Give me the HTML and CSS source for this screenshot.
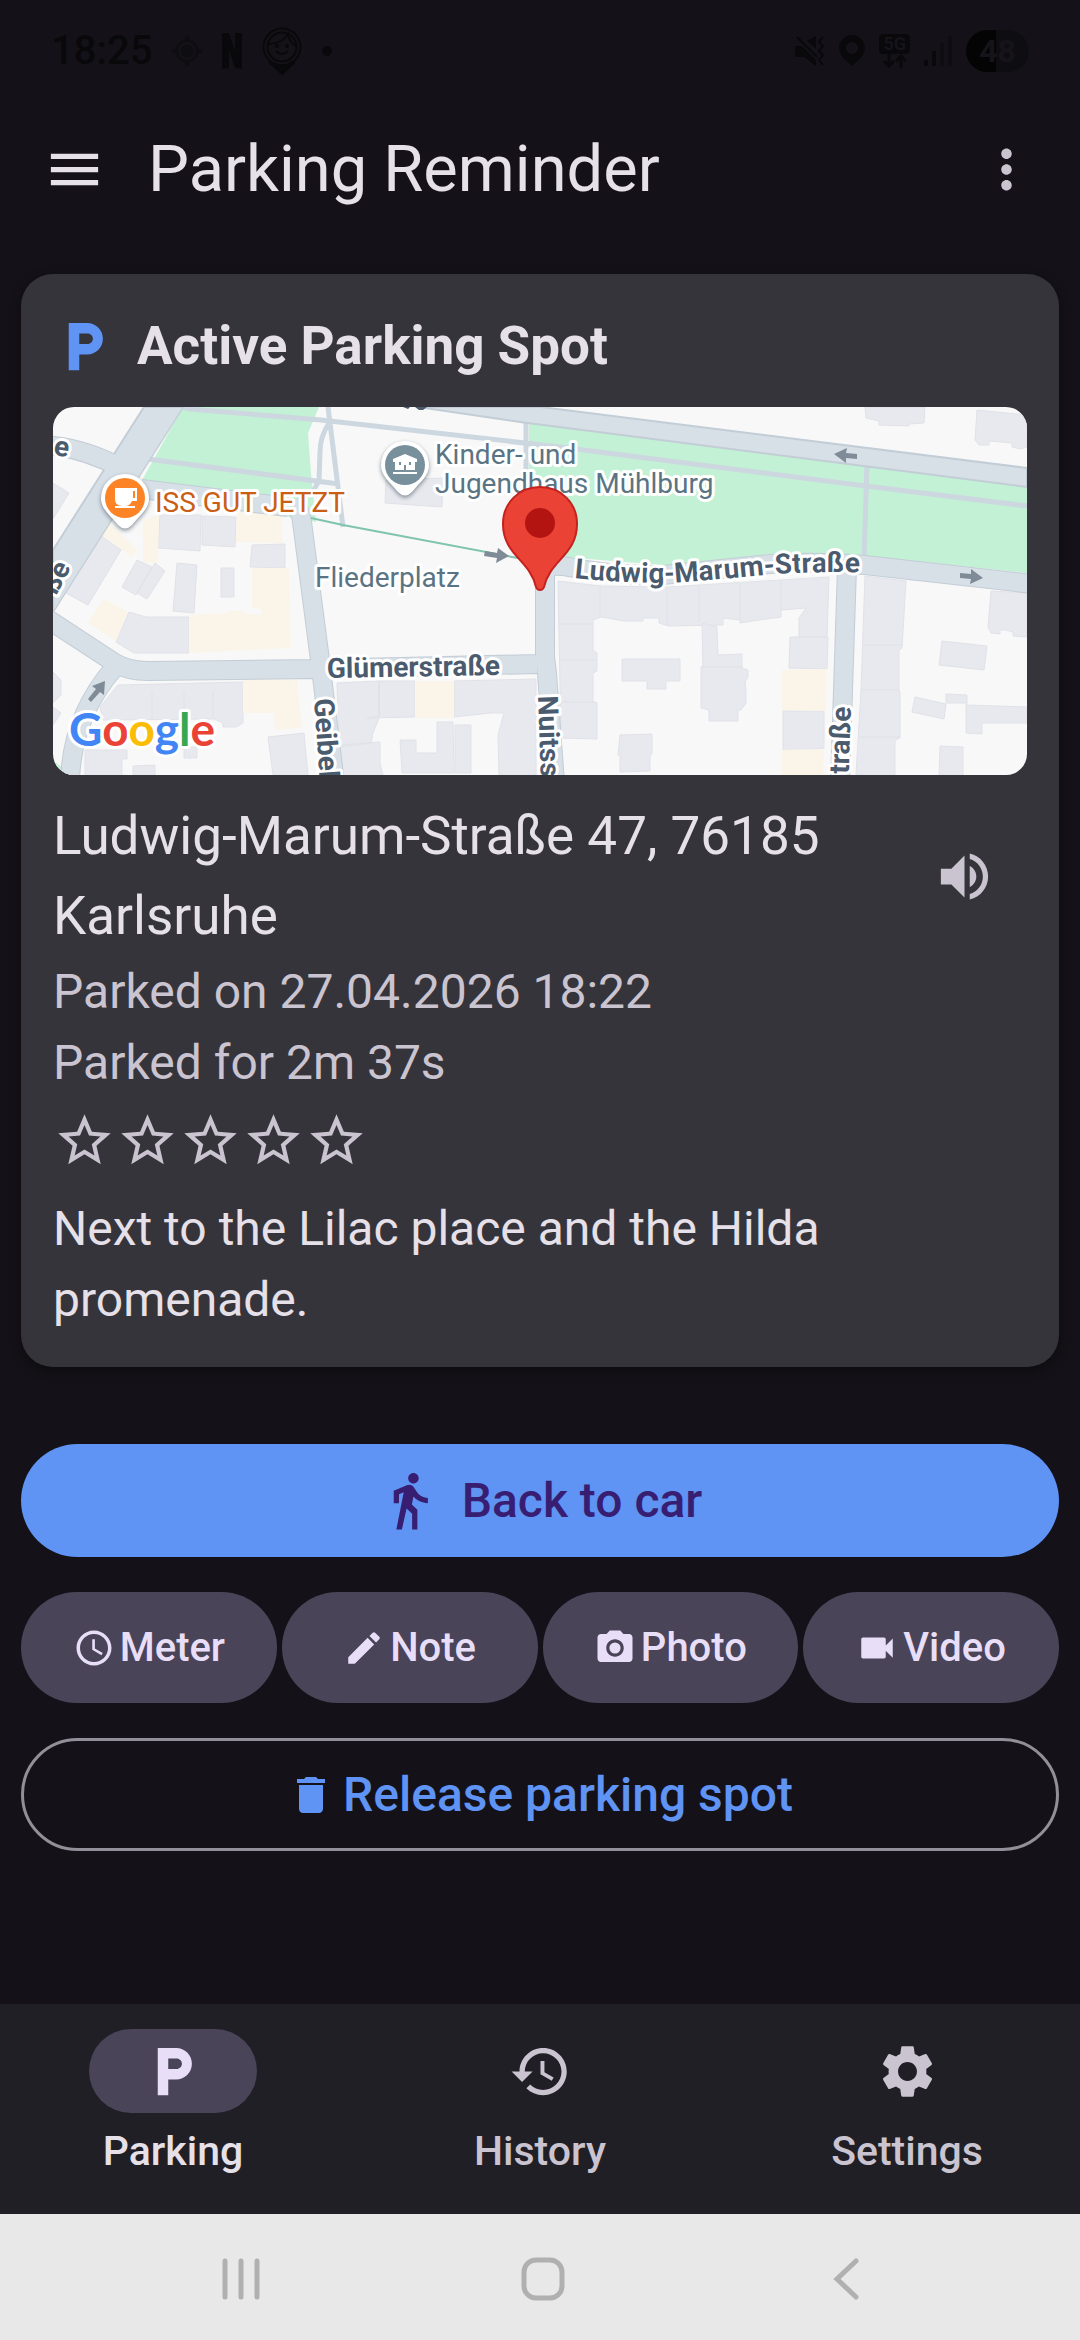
FILE: index.html
```html
<!DOCTYPE html>
<html lang="en">
<head>
  <meta charset="UTF-8" />
  <meta name="viewport" content="width=device-width, initial-scale=1" />
  <title>Parking Reminder</title>
  <link rel="stylesheet" href="styles.css">
</head>
<body>
  <div class="status-bar">
    <div class="status-left">
      <span class="clock">18:25</span>
      <svg class="status-icon dim" width="30" height="32" viewBox="0 0 32 32"><circle cx="16" cy="16" r="11" fill="none" stroke="currentColor" stroke-width="3"/><circle cx="16" cy="16" r="7" fill="currentColor"/><path d="M14 0h4v5h-4zM14 27h4v5h-4zM0 14h5v4H0zM27 14h5v4h-5z" fill="currentColor"/></svg>
      <svg class="status-icon" width="20" height="36" viewBox="0 0 20 36"><path d="M0 0h7l6 18V0h7v36l-7-1L7 17v18l-7 1z" fill="currentColor"/></svg>
      <svg class="status-icon" width="40" height="48" viewBox="0 0 40 48" fill="none" stroke="currentColor" stroke-width="2"><circle cx="20" cy="20" r="18.500"/><circle cx="20" cy="20" r="14.500"/><path d="M6 17q14 0 20-10 1 8 8 12"/><path d="M14 24q6 6 12 0"/><circle cx="15" cy="19" r="1"/><circle cx="25" cy="19" r="1"/><path d="M7 35q13 7 26 0L20 47z" fill="currentColor"/></svg>
      <svg class="status-icon" width="10" height="10" viewBox="0 0 10 10"><circle cx="5" cy="5" r="5" fill="currentColor"/></svg>
    </div>
    <div class="status-right">
      <svg class="status-icon" width="30" height="32" viewBox="0 0 30 32"><path d="M0 11h7l14 14v6l-12-9H0zM12 6l9-5v13z" fill="currentColor"/><path d="M2 2l20 20M28 2l-4 5 4 4-4 5 4 4-4 5 4 5" fill="none" stroke="currentColor" stroke-width="2"/></svg>
      <svg class="status-icon" width="26" height="32" viewBox="0 0 26 32"><path d="M13 0C6 0 0 6 0 13c0 8 8 13 13 18 5-5 13-10 13-18C26 6 20 0 13 0zm0 7a6 6 0 1 1 0 12 6 6 0 0 1 0-12z" fill="currentColor" fill-rule="evenodd"/></svg>
      <div class="network">
        <span class="network-type">5G</span>
        <svg width="24" height="14" viewBox="0 0 24 14" fill="none" stroke="currentColor" stroke-width="3"><path d="M6 0v12M1 7l5 5 5-5M18 14V2M13 7l5-5 5 5"/></svg>
      </div>
      <svg class="status-icon" width="28" height="30" viewBox="0 0 28 30"><path d="M0 24h4v6H0zM8 15h4v15H8z" fill="currentColor"/><path d="M16 7h4v23h-4zM24 0h4v30h-4z" fill="#0e0d12"/></svg>
      <span class="battery">48</span>
    </div>
  </div>

  <header class="app-bar">
    <button class="icon-button" aria-label="Open menu">
      <svg class="icon light" viewBox="0 0 24 24"><path d="M3 18h18v-2H3v2zm0-5h18v-2H3v2zm0-7v2h18V6H3z"/></svg>
    </button>
    <h1>Parking Reminder</h1>
    <button class="icon-button" aria-label="More options">
      <svg class="icon" viewBox="0 0 24 24"><path d="M12 8c1.100 0 2-.9 2-2s-.9-2-2-2-2 .9-2 2 .9 2 2 2zm0 2c-1.100 0-2 .9-2 2s.9 2 2 2 2-.9 2-2-.9-2-2-2zm0 6c-1.100 0-2 .9-2 2s.9 2 2 2 2-.9 2-2-.9-2-2-2z"/></svg>
    </button>
  </header>

  <main>
    <section class="card">
      <div class="card-header">
        <svg class="icon accent" viewBox="0 0 24 24"><path d="M13 3H6v18h4v-6h3c3.310 0 6-2.690 6-6s-2.690-6-6-6zm.2 8H10V7h3.200c1.100 0 2 .9 2 2s-.9 2-2 2z"/></svg>
        <h2>Active Parking Spot</h2>
      </div>

      <svg class="map" viewBox="0 0 974 368" preserveAspectRatio="xMidYMid slice" role="img" aria-label="Map of the parking spot">
        <defs>
          <path id="ludwigPath" d="M521 171Q575 177 624 175.500Q670 172 717 167.500Q760 164 830 166"/>
        </defs>
        <rect width="974" height="368" fill="#f8f8f8"/>

        <!-- parks -->
        <g fill="#c3f1d5">
          <path d="M130 0H266L255 26 258 66 263 115 84 82z"/>
          <path d="M476 16L974 80V166L813 149 770 146 717 147 638 158 610 158 510 150 476 80z"/>
          <path d="M0 353l8 7v8H0z"/>
        </g>

        <!-- buildings -->
        <g fill="#e8e9ee" stroke="#e0e2e8" stroke-width="1">
          <path d="M107 108L148 108 147 144 105 141zM149 109L183 110 182 140 149 138zM199 138L232 137 232 161 197 160z"/>
          <path d="M76 205L93 210 136 210 136 246 81 246 63 235zM44 126L68 143 35 198 11 185zM84 153L99 160 83 188 69 180zM102 156L112 164 94 192 84 186zM124 156L144 158 141 206 120 204zM168 161h13v29h-13z"/>
          <path d="M65 278L190 275 190 316 183 320 170 320 170 316 161 312 50 313 47 300zM215 330L251 326 255 368 220 368zM32 343h42v9h-5v16H32zM80 359L102 358V368H80zM131 340h13v11h-13z"/>
          <path d="M0 265L8 273V288L0 296zM0 300L8 306 0 318zM0 76L16 86 0 112zM333 73L390 71 389 100 332 96z"/>
          <path d="M284 276L326 274 326 311 320 326 318 336 286 340zM326 274H362V310L314 311 326 309zM401 274L483 272V368H446L445 328 451 306 438 306 401 310zM286 338L327 335 327 356 330 368H290zM347 333H363V346H384V315H400L401 366H349zM402 318h16v48h-16z"/>
          <path d="M505 174L547 179 614 180 776 170 774 230H746V211L753 201 728 203V210L706 213 687 216 687 213 670 211V218L616 219 606 216V211L590 211V214H571L548 210 540 213V243L544 246V264L540 266V295L544 296V332L508 331z"/>
          <path d="M649 216L664 220 665 248 689 247V261L695 263V270L692 275 693 284 693 296 688 303 685 303V314H656V303L648 301V260L650 260z"/>
          <path d="M569 252H627V274H613V282H594V274H569zM567 328L599 327V347L597 348V364L567 365V348L565 348zM737 230H775L774 262 736 261zM730 304H771V341L730 345z"/>
          <path d="M812 169L853 174 849 241 846 243V283L847 285V331L842 333V368H803L808 283z"/>
          <path d="M938 184L974 186V230L960 229 960 225 953 223 947 223V227L938 226 935 220zM889 234L934 239 931 263 886 258zM862 290L893 297 891 312 859 305zM893 287L914 288V298L974 300V316H929V327L913 326V296H893zM887 339L910 340V368H886z"/>
          <path d="M812 0H872L871 16 856 17V19L826 18V14L813 11zM924 3L974 8V40L967 42 959 40V36L936 34V38L926 38 922 33z"/>
        </g>
        <g fill="#faf5e8">
          <path d="M184 104L229 106V136L183 135zM199 161H236L238 241 136 246V208L175 206V204H190V206L208 208V202L199 200zM51 192L75 205 63 234 35 216zM50 110L68 127 84 143 79 150 45 126zM90 113L106 108 105 156 90 155z"/>
          <path d="M190 270L211 269 211 271 244 271 249 321 222 323 221 306H190zM362 274H401V311H362zM729 263L774 262 773 304 729 303zM729 343L771 342 770 368H729z"/>
        </g>
        <path d="M547 180V210M614 181V218M646 179V215M687 177V212M728 174V203M505 217h35M506 253h37M507 295h36M649 260h40M810 238h40M808 283h38M806 330h41M99 285v27M131 285v27M160 285v27M326 275v35" fill="none" stroke="#dfe1e7" stroke-width="1"/>

        <!-- footpaths -->
        <g fill="none" stroke="#ccd7e0" stroke-width="5">
          <path d="M125 -2L136 2 268 13 507 40 813 79 974 99M95 52L286 77M275 0L277 16 290 120M276 16Q267 30 267 45L266 73 261 83M473 15V90M814 57L811 152"/>
        </g>

        <!-- roads, outline first and fill on top -->
        <g fill="none" stroke="#c3cdd6" stroke-width="20">
          <path d="M-10 38Q30 40 70 62M88 82L235 100M240 98Q248 103 249 115L267 253 282 376M-10 209L62 256Q75 264 95 264L260 262 484 257M62 260Q18 310 17 376M492 158V250L494 266 502 376M485 158L510 159Q560 169 610 168L717 157Q760 154 812 158L980 177M794 160L787 376"/>
        </g>
        <path d="M91 0H130L0 205V143zM365 0H488L974 61V80L467 15z" fill="#d7dfe7" stroke="#c3cdd6" stroke-width="2"/>
        <g fill="none" stroke="#d7dfe7" stroke-width="18">
          <path d="M-10 38Q30 40 70 62M88 82L235 100M240 98Q248 103 249 115L267 253 282 376M-10 209L62 256Q75 264 95 264L260 262 484 257M62 260Q18 310 17 376M492 158V250L494 266 502 376M485 158L510 159Q560 169 610 168L717 157Q760 154 812 158L980 177M794 160L787 376"/>
        </g>
        <path d="M92 1H129L1 203V144z" fill="#d7dfe7"/>

        <path d="M258 111L290 118 470 152" fill="none" stroke="#80c4ac" stroke-width="2"/>
        <g fill="#7f8b96">
          <path d="M432 144l12 2 1-5 11 8-13 7 1-5-13-2z"/>
          <path d="M781 47l13-6-1 5 11 1v5l-11-1v5z"/>
          <path d="M930 171l-13 6 1-5-11-1v-5l11 1v-5z"/>
          <path d="M52 274l-1 14-4-3-9 10-3-3 8-10-4-3z"/>
        </g>
        <path d="M350 0h7l-2 2zM362 0h12l-4 3h-4z" fill="#4b5b6e"/>

        <!-- street names -->
        <g class="street">
          <text x="274" y="271" transform="rotate(-1 274 271)">Glümerstraße</text>
          <text><textPath href="#ludwigPath">Ludwig-Marum-Straße</textPath></text>
          <text transform="translate(485 289) rotate(88)">Nuitss</text>
          <text transform="translate(261 292) rotate(86)">Geibel</text>
          <text transform="translate(798 300) rotate(-88)" text-anchor="end">traße</text>
          <text transform="translate(18 160) rotate(-63)" text-anchor="end">ße</text>
          <text transform="translate(15 50) rotate(8)" text-anchor="end">e</text>
        </g>
        <g class="poi">
          <text x="382" y="57">Kinder- und</text>
          <text x="382" y="86">Jugendhaus Mühlburg</text>
          <text x="262" y="180">Fliederplatz</text>
          <text class="food" x="102" y="105">ISS GUT JETZT</text>
        </g>

        <!-- place pins -->
        <g class="place-pin">
          <path d="M72 67a24 24 0 0 1 24 24c0 11-9 17-17 27q-7 7-14 0c-8-10-17-16-17-27a24 24 0 0 1 24-24z" fill="#fff"/>
          <circle cx="72" cy="91" r="20" fill="#fc8427"/>
          <path d="M62 81h22v13h-5q-2 5-7 5h-3q-7 0-7-7zm18 3v7h2v-7zM62 99h20v2H62z" fill="#fff" fill-rule="evenodd"/>
        </g>
        <g class="place-pin">
          <path d="M352 34a24 24 0 0 1 24 24c0 11-9 17-17 27q-7 7-14 0c-8-10-17-16-17-27a24 24 0 0 1 24-24z" fill="#fff"/>
          <circle cx="352" cy="58" r="20" fill="#78909c"/>
          <path d="M352 47l12 5v3h-2v8h-9v-5h-2v5h-9v-8h-2v-3zM340 65h24v2h-24zM346 55v3h2v-3zM356 55v3h2v-3z" fill="#fff" fill-rule="evenodd"/>
        </g>

        <path d="M487 80c21 0 37 16 37 37 0 31-27 36-33 63q-1 3-4 3t-4-3c-6-27-33-32-33-63 0-21 16-37 37-37z" fill="#ea4335" stroke="#c5221f" stroke-width="2"/>
        <circle cx="487" cy="116" r="15" fill="#b31412"/>

        <text class="map-logo" x="16" y="339"><tspan fill="#4285f4">G</tspan><tspan fill="#ea4335">o</tspan><tspan fill="#fbbc05">o</tspan><tspan fill="#4285f4">g</tspan><tspan fill="#34a853">l</tspan><tspan fill="#ea4335">e</tspan></text>
      </svg>

      <div class="address-row">
        <p class="address">Ludwig-Marum-Straße 47, 76185 Karlsruhe</p>
        <button class="icon-button" aria-label="Read address aloud">
          <svg class="icon" viewBox="0 0 24 24"><path d="M3 9v6h4l5 5V4L7 9H3zm13.500 3c0-1.770-1.020-3.290-2.500-4.030v8.050c1.480-.73 2.500-2.250 2.500-4.020zM14 3.230v2.060c2.890.86 5 3.540 5 6.710s-2.110 5.850-5 6.710v2.060c4.010-.91 7-4.490 7-8.770s-2.990-7.860-7-8.770z"/></svg>
        </button>
      </div>
      <p class="detail">Parked on 27.04.2026 18:22</p>
      <p class="detail">Parked for 2m 37s</p>

      <div class="rating">
        <button aria-label="1 star"><svg class="icon" viewBox="0 0 24 24"><path d="M22 9.240l-7.190-.62L12 2 9.190 8.630 2 9.240l5.460 4.730L5.820 21 12 17.270 18.180 21l-1.630-7.030L22 9.240zM12 15.400l-3.760 2.270 1-4.280-3.320-2.880 4.380-.38L12 6.100l1.710 4.040 4.380.38-3.320 2.880 1 4.280L12 15.400z"/></svg></button>
        <button aria-label="2 stars"><svg class="icon" viewBox="0 0 24 24"><path d="M22 9.240l-7.190-.62L12 2 9.190 8.630 2 9.240l5.460 4.730L5.820 21 12 17.270 18.180 21l-1.630-7.030L22 9.240zM12 15.400l-3.760 2.270 1-4.280-3.320-2.880 4.380-.38L12 6.100l1.710 4.040 4.380.38-3.320 2.880 1 4.280L12 15.400z"/></svg></button>
        <button aria-label="3 stars"><svg class="icon" viewBox="0 0 24 24"><path d="M22 9.240l-7.190-.62L12 2 9.190 8.630 2 9.240l5.460 4.730L5.820 21 12 17.270 18.180 21l-1.630-7.030L22 9.240zM12 15.400l-3.760 2.270 1-4.280-3.320-2.880 4.380-.38L12 6.100l1.710 4.040 4.380.38-3.320 2.880 1 4.280L12 15.400z"/></svg></button>
        <button aria-label="4 stars"><svg class="icon" viewBox="0 0 24 24"><path d="M22 9.240l-7.190-.62L12 2 9.190 8.630 2 9.240l5.460 4.730L5.820 21 12 17.270 18.180 21l-1.630-7.030L22 9.240zM12 15.400l-3.760 2.270 1-4.280-3.320-2.880 4.380-.38L12 6.100l1.710 4.040 4.380.38-3.320 2.880 1 4.280L12 15.400z"/></svg></button>
        <button aria-label="5 stars"><svg class="icon" viewBox="0 0 24 24"><path d="M22 9.240l-7.190-.62L12 2 9.190 8.630 2 9.240l5.460 4.730L5.820 21 12 17.270 18.180 21l-1.630-7.030L22 9.240zM12 15.400l-3.760 2.270 1-4.280-3.320-2.880 4.380-.38L12 6.100l1.710 4.040 4.380.38-3.320 2.880 1 4.280L12 15.400z"/></svg></button>
      </div>

      <p class="note">Next to the Lilac place and the Hilda promenade.</p>
    </section>

    <div class="actions">
      <button class="btn btn-primary">
        <svg class="icon" viewBox="0 0 24 24"><path d="M13.500 5.500c1.100 0 2-.9 2-2s-.9-2-2-2-2 .9-2 2 .9 2 2 2zM9.800 8.900L7 23h2.100l1.800-8 2.100 2v6h2v-7.500l-2.100-2 .6-3C14.800 12 16.800 13 19 13v-2c-1.900 0-3.500-1-4.300-2.400l-1-1.600c-.4-.6-1-1-1.700-1-.3 0-.5.1-.8.1L6 8.300V13h2V9.600l1.800-.7"/></svg>
        Back to car
      </button>
      <div class="btn-row">
        <button class="btn btn-tonal">
          <svg class="icon" viewBox="0 0 24 24"><path d="M11.990 2C6.470 2 2 6.480 2 12s4.470 10 9.990 10C17.520 22 22 17.520 22 12S17.520 2 11.990 2zM12 20c-4.420 0-8-3.580-8-8s3.580-8 8-8 8 3.580 8 8-3.580 8-8 8zm.5-13H11v6l5.250 3.150.75-1.230-4.500-2.670z"/></svg>
          Meter
        </button>
        <button class="btn btn-tonal">
          <svg class="icon" viewBox="0 0 24 24"><path d="M3 17.250V21h3.750L17.810 9.940l-3.750-3.750L3 17.250zM20.710 7.040c.39-.39.39-1.020 0-1.410l-2.340-2.340c-.39-.39-1.020-.39-1.410 0l-1.830 1.830 3.750 3.750 1.830-1.830z"/></svg>
          Note
        </button>
        <button class="btn btn-tonal">
          <svg class="icon" viewBox="0 0 24 24"><circle cx="12" cy="12" r="3.200"/><path d="M9 2L7.170 4H4c-1.100 0-2 .9-2 2v12c0 1.100.9 2 2 2h16c1.100 0 2-.9 2-2V6c0-1.100-.9-2-2-2h-3.170L15 2H9zm3 15c-2.760 0-5-2.240-5-5s2.240-5 5-5 5 2.240 5 5-2.240 5-5 5z"/></svg>
          Photo
        </button>
        <button class="btn btn-tonal">
          <svg class="icon" viewBox="0 0 24 24"><path d="M17 10.500V7c0-.55-.45-1-1-1H4c-.55 0-1 .45-1 1v10c0 .55.45 1 1 1h12c.55 0 1-.45 1-1v-3.500l4 4v-11l-4 4z"/></svg>
          Video
        </button>
      </div>
      <button class="btn btn-outline">
        <svg class="icon" viewBox="0 0 24 24"><path d="M6 19c0 1.100.9 2 2 2h8c1.100 0 2-.9 2-2V7H6v12zM19 4h-3.500l-1-1h-5l-1 1H5v2h14V4z"/></svg>
        Release parking spot
      </button>
    </div>
  </main>

  <nav class="bottom-nav">
    <a href="#parking" class="active">
      <span class="nav-icon"><svg class="icon" viewBox="0 0 24 24"><path d="M13 3H6v18h4v-6h3c3.310 0 6-2.690 6-6s-2.690-6-6-6zm.2 8H10V7h3.200c1.100 0 2 .9 2 2s-.9 2-2 2z"/></svg></span>
      Parking
    </a>
    <a href="#history">
      <span class="nav-icon"><svg class="icon" viewBox="0 0 24 24"><path d="M13 3c-4.970 0-9 4.030-9 9H1l3.890 3.890.07.14L9 12H6c0-3.870 3.130-7 7-7s7 3.130 7 7-3.130 7-7 7c-1.930 0-3.680-.79-4.940-2.060l-1.420 1.420C8.270 19.990 10.510 21 13 21c4.970 0 9-4.030 9-9s-4.030-9-9-9zm-1 5v5l4.280 2.540.72-1.210-3.500-2.080V8H12z"/></svg></span>
      History
    </a>
    <a href="#settings">
      <span class="nav-icon"><svg class="icon" viewBox="0 0 24 24"><path d="M19.140 12.940c.04-.3.06-.61.06-.94 0-.32-.02-.64-.07-.94l2.030-1.580c.18-.14.23-.41.12-.61l-1.920-3.320c-.12-.22-.37-.29-.59-.22l-2.390.96c-.5-.38-1.030-.7-1.620-.94l-.36-2.540c-.04-.24-.24-.41-.48-.41h-3.840c-.24 0-.43.17-.47.41l-.36 2.540c-.59.24-1.130.57-1.620.94l-2.390-.96c-.22-.08-.47 0-.59.22L2.740 8.870c-.12.21-.08.47.12.61l2.030 1.580c-.05.3-.09.63-.09.94s.02.64.07.94l-2.030 1.580c-.18.14-.23.41-.12.61l1.920 3.320c.12.22.37.29.59.22l2.390-.96c.5.38 1.030.7 1.620.94l.36 2.540c.05.24.24.41.48.41h3.840c.24 0 .44-.17.47-.41l.36-2.540c.59-.24 1.130-.56 1.620-.94l2.390.96c.22.08.47 0 .59-.22l1.920-3.320c.12-.22.07-.47-.12-.61l-2.010-1.580zM12 15.600c-1.980 0-3.600-1.620-3.600-3.600s1.620-3.600 3.600-3.600 3.600 1.620 3.600 3.600-1.620 3.600-3.600 3.600z"/></svg></span>
      Settings
    </a>
  </nav>

  <div class="system-nav">
    <button aria-label="Recent apps"><svg width="44" height="44" viewBox="0 0 44 44"><path d="M6 4v36M22 4v36M38 4v36"/></svg></button>
    <button aria-label="Home"><svg width="44" height="44" viewBox="0 0 44 44"><rect x="3" y="3" width="38" height="38" rx="12"/></svg></button>
    <button aria-label="Back"><svg width="44" height="44" viewBox="0 0 44 44"><path d="M32 4L13 22l19 18"/></svg></button>
  </div>
</body>
</html>
```
FILE: styles.css
```css
* {
  box-sizing: border-box;
}

body {
  margin: 0;
  min-height: 100vh;
  display: flex;
  flex-direction: column;
  background: #141218;
  color: #e6e0e9;
  font-family: Roboto, "Liberation Sans", sans-serif;
  font-size: 48px;
  line-height: 71px;
}

h1, h2, p {
  margin: 0;
}

button {
  font: inherit;
  color: inherit;
  background: none;
  border: none;
  padding: 0;
  cursor: pointer;
}

.icon {
  display: block;
  flex: none;
  width: 63px;
  height: 63px;
  fill: #cac4d0;
}

.icon.light {
  fill: #e6e0e9;
}

.icon.accent {
  fill: #5f93f4;
}

.icon-button {
  flex: none;
  width: 126px;
  height: 126px;
  display: flex;
  align-items: center;
  justify-content: center;
}

/* status bar */
.status-bar {
  height: 85px;
  padding: 17px 51px 0;
  display: flex;
  justify-content: space-between;
  align-items: center;
  color: #09080b;
}

.status-left, .status-right {
  display: flex;
  align-items: center;
}

.status-left {
  gap: 20px;
}

.status-right {
  gap: 14px;
}

.clock {
  font-size: 40px;
  font-weight: 500;
  line-height: 44px;
}

.status-icon {
  flex: none;
}

.dim {
  color: #0e0d12;
}

.network {
  display: flex;
  flex-direction: column;
  align-items: center;
}

.network-type {
  padding: 0 4px;
  border-radius: 4px;
  background: #09080b;
  color: #16141a;
  font-size: 18px;
  font-weight: 700;
  line-height: 20px;
}

.battery {
  width: 63px;
  border-radius: 21px;
  background: linear-gradient(90deg, #040405 48%, #0e0d12 48%);
  color: #16141a;
  font-size: 32px;
  font-weight: 700;
  line-height: 42px;
  text-align: center;
}

/* app bar */
.app-bar {
  height: 168px;
  padding: 0 11px;
  display: flex;
  align-items: center;
  gap: 11px;
}

.app-bar h1 {
  flex: 1;
  font-size: 65px;
  font-weight: 400;
  line-height: 80px;
}

main {
  flex: 1;
  padding: 21px;
}

/* parking card */
.card {
  padding: 32px;
  border-radius: 32px;
  background: #36343b;
  box-shadow: 0 4px 12px rgb(0 0 0 / 0.4);
}

.card-header {
  display: flex;
  align-items: center;
  gap: 21px;
  margin-bottom: 21px;
}

.card-header h2 {
  font-size: 53px;
  font-weight: 700;
  line-height: 80px;
}

.map {
  display: block;
  width: 100%;
  height: 368px;
  border-radius: 21px;
  margin-bottom: 21px;
}

.map text {
  font-size: 28px;
  paint-order: stroke;
  stroke: #fff;
  stroke-width: 6px;
  stroke-linejoin: round;
}

.street {
  fill: #4b5b6e;
  font-weight: 700;
}

.poi {
  fill: #5a7483;
}

.map .food {
  fill: #c95e14;
}

.place-pin {
  filter: drop-shadow(0 2px 2px rgb(60 75 90 / 0.6));
}

.map .map-logo {
  font-family: Lato, sans-serif;
  font-size: 46px;
  font-weight: 700;
}

.address-row {
  display: flex;
  align-items: center;
}

.address {
  flex: 1;
  font-size: 53px;
  line-height: 80px;
}

.detail {
  color: #cac4d0;
}

.rating {
  display: flex;
  margin: 11px 0 21px;
}

/* buttons */
.actions {
  display: flex;
  flex-direction: column;
  gap: 35px;
  margin-top: 77px;
}

.btn {
  display: flex;
  align-items: center;
  justify-content: center;
  height: 113px;
  border-radius: 57px;
  font-weight: 500;
}

.btn .icon {
  fill: currentColor;
}

.btn-primary {
  gap: 21px;
  background: #5f93f4;
  color: #381e72;
}

.btn-row {
  display: grid;
  grid-template-columns: repeat(4, 1fr);
  gap: 5px;
}

.btn-tonal {
  gap: 5px;
  height: 111px;
  background: #4a4458;
  color: #e8def8;
  font-size: 40px;
}

.btn-tonal .icon {
  width: 42px;
  height: 42px;
}

.btn-outline {
  gap: 8px;
  border: 3px solid #938f99;
  color: #5f93f4;
}

.btn-outline .icon {
  width: 48px;
  height: 48px;
}

/* bottom navigation */
.bottom-nav {
  height: 210px;
  padding-top: 25px;
  display: grid;
  grid-template-columns: repeat(3, 1fr);
  gap: 21px;
  background: #211f26;
}

.bottom-nav a {
  display: flex;
  flex-direction: column;
  align-items: center;
  gap: 12px;
  color: #cac4d0;
  font-size: 41px;
  font-weight: 500;
  line-height: 52px;
  text-decoration: none;
}

.bottom-nav a.active {
  color: #e6e0e9;
}

.nav-icon {
  width: 168px;
  height: 84px;
  border-radius: 42px;
  display: flex;
  align-items: center;
  justify-content: center;
}

.active .nav-icon {
  background: #4a4458;
}

.active .icon {
  fill: #e8def8;
}

.system-nav {
  height: 126px;
  padding: 3px 83px 0 90px;
  display: grid;
  grid-template-columns: repeat(3, 1fr);
  background: #e8e8e8;
}

.system-nav button {
  display: flex;
  align-items: center;
  justify-content: center;
}

.system-nav svg {
  fill: none;
  stroke: #b0b0b0;
  stroke-width: 5;
  stroke-linecap: round;
}
```
